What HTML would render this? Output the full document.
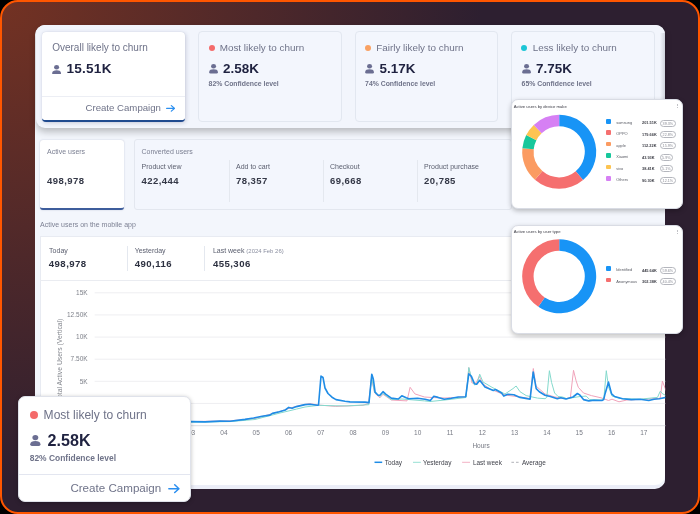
<!DOCTYPE html>
<html><head><meta charset="utf-8">
<style>
*{margin:0;padding:0;box-sizing:border-box}
html,body{width:700px;height:514px;overflow:hidden;background:#000;font-family:"Liberation Sans",sans-serif}
.abs{position:absolute}
.t{position:absolute;white-space:nowrap;line-height:1}
#frame{position:absolute;left:0;top:0;width:700px;height:514px;border-radius:18px;border:2px solid #ff5600;
 background:radial-gradient(circle 480px at 0 0,#733223 0%,#2d1f30 100%)}
#dash{position:absolute;left:35px;top:25px;width:630.3px;height:463.5px;border-radius:10px;background:#eceef8;overflow:hidden}
#dash::after{content:"";position:absolute;left:0;top:0;right:0;bottom:3.2px;background:#f3f6fc;border-radius:10px 10px 0 0}
#toppanel{position:absolute;left:35.5px;top:25px;width:629.5px;height:102.7px;border-radius:9px;background:#f2f5fc;
 box-shadow:0 4px 7px rgba(0,0,0,.24)}
</style></head><body>
<div id="frame"></div>
<div id="root" style="position:absolute;left:0;top:0;width:700px;height:514px;will-change:transform">
<div id="dash"></div>
<div class="abs" style="left:39.75px;top:139.5px;width:84.6px;height:70.3px;background:#fff;border-radius:3px;box-shadow:0 0 1.5px rgba(70,80,120,.35);border-bottom:2px solid #3e5d9c"></div>
<div class="t" style="left:47.00px;top:147.80px;font-size:7px;color:#7c8093;">Active users</div>
<div class="t" style="left:47.00px;top:176.12px;font-size:9.5px;color:#343847;font-weight:bold;letter-spacing:0.45px;">498,978</div>
<div class="abs" style="left:133.8px;top:139px;width:378px;height:70.6px;background:#f3f6fd;border:1px solid #e3e7ef;border-radius:3px"></div>
<div class="t" style="left:141.50px;top:148.05px;font-size:7px;color:#7c8093;">Converted users</div>
<div class="t" style="left:141.50px;top:163.15px;font-size:7px;color:#5a5e6e;">Product view</div>
<div class="t" style="left:141.50px;top:176.23px;font-size:9.5px;color:#343847;font-weight:bold;letter-spacing:0.45px;">422,444</div>
<div class="t" style="left:236.00px;top:163.15px;font-size:7px;color:#5a5e6e;">Add to cart</div>
<div class="t" style="left:236.00px;top:176.23px;font-size:9.5px;color:#343847;font-weight:bold;letter-spacing:0.45px;">78,357</div>
<div class="t" style="left:330.00px;top:163.15px;font-size:7px;color:#5a5e6e;">Checkout</div>
<div class="t" style="left:330.00px;top:176.23px;font-size:9.5px;color:#343847;font-weight:bold;letter-spacing:0.45px;">69,668</div>
<div class="t" style="left:424.10px;top:163.15px;font-size:7px;color:#5a5e6e;">Product purchase</div>
<div class="t" style="left:424.10px;top:176.23px;font-size:9.5px;color:#343847;font-weight:bold;letter-spacing:0.45px;">20,785</div>
<div class="abs" style="left:228.6px;top:159.7px;width:0.8px;height:42px;background:#e4e8ef"></div>
<div class="abs" style="left:323.1px;top:159.7px;width:0.8px;height:42px;background:#e4e8ef"></div>
<div class="abs" style="left:417.4px;top:159.7px;width:0.8px;height:42px;background:#e4e8ef"></div>
<div class="t" style="left:40.10px;top:221.15px;font-size:7px;color:#7c8093;">Active users on the mobile app</div>
<div class="abs" style="left:40px;top:236px;width:625.3px;height:249.3px;background:#fff;border-top:1px solid #e8ebf2;border-left:1px solid #e8ebf2;border-radius:0 0 10px 0"></div>
<div class="t" style="left:49.10px;top:246.95px;font-size:7px;color:#5a5e6e;">Today</div>
<div class="t" style="left:48.80px;top:259.24px;font-size:9.6px;color:#2c3040;font-weight:bold;letter-spacing:0.45px;">498,978</div>
<div class="t" style="left:134.70px;top:246.95px;font-size:7px;color:#5a5e6e;">Yesterday</div>
<div class="t" style="left:134.70px;top:259.24px;font-size:9.6px;color:#2c3040;font-weight:bold;letter-spacing:0.45px;">490,116</div>
<div class="t" style="left:212.90px;top:246.95px;font-size:7px;color:#5a5e6e;">Last week <span style="font-size:5.95px;color:#8b8fa0">(2024 Feb 26)</span></div>
<div class="t" style="left:212.90px;top:259.24px;font-size:9.6px;color:#2c3040;font-weight:bold;letter-spacing:0.45px;">455,306</div>
<div class="abs" style="left:126.5px;top:246px;width:0.8px;height:25px;background:#e4e8ef"></div>
<div class="abs" style="left:204.1px;top:246px;width:0.8px;height:25px;background:#e4e8ef"></div>
<div class="abs" style="left:40px;top:279.8px;width:626px;height:0.8px;background:#eaecf1"></div>
<svg class="abs" style="left:0;top:0" width="700" height="514">
<g stroke="#ececef" stroke-width="0.9">
<line x1="94.7" x2="665.3" y1="292.80" y2="292.80"/>
<line x1="94.7" x2="665.3" y1="314.93" y2="314.93"/>
<line x1="94.7" x2="665.3" y1="337.06" y2="337.06"/>
<line x1="94.7" x2="665.3" y1="359.19" y2="359.19"/>
<line x1="94.7" x2="665.3" y1="381.32" y2="381.32"/>
<line x1="94.7" x2="665.3" y1="403.45" y2="403.45"/>
</g>
<line x1="94.7" x2="665.3" y1="425.6" y2="425.6" stroke="#e2e3e7" stroke-width="1.1"/>
<g font-family="Liberation Sans" font-size="6.5" fill="#7e818a" text-anchor="end">
<text x="87.6" y="295.10">15K</text>
<text x="87.6" y="317.23">12.50K</text>
<text x="87.6" y="339.36">10K</text>
<text x="87.6" y="361.49">7.50K</text>
<text x="87.6" y="383.62">5K</text>
<text x="87.6" y="405.75">2.50K</text>
<text x="87.6" y="427.88">0</text>
</g>
<text transform="translate(61.5,360) rotate(-90)" font-family="Liberation Sans" font-size="6.8" fill="#85888f" text-anchor="middle">Total Active Users (Vertical)</text>
<g font-family="Liberation Sans" font-size="6.5" fill="#777a84" text-anchor="middle">
<text x="94.70" y="434.7">00</text>
<text x="127.00" y="434.7">01</text>
<text x="159.30" y="434.7">02</text>
<text x="191.60" y="434.7">03</text>
<text x="223.90" y="434.7">04</text>
<text x="256.20" y="434.7">05</text>
<text x="288.50" y="434.7">06</text>
<text x="320.80" y="434.7">07</text>
<text x="353.10" y="434.7">08</text>
<text x="385.40" y="434.7">09</text>
<text x="417.70" y="434.7">10</text>
<text x="450.00" y="434.7">11</text>
<text x="482.30" y="434.7">12</text>
<text x="514.60" y="434.7">13</text>
<text x="546.90" y="434.7">14</text>
<text x="579.20" y="434.7">15</text>
<text x="611.50" y="434.7">16</text>
<text x="643.80" y="434.7">17</text>
<text x="481.1" y="448">Hours</text></g>
<defs><clipPath id="cp"><rect x="90" y="280" width="575.3" height="200"/></clipPath></defs>
<g fill="none" stroke-linejoin="round" stroke-linecap="round" clip-path="url(#cp)">
<polyline points="95,421.6 191,421.6 230,420.8 255,418.5 280,411.5 290,408 300,405.5 309.4,403.6 318,405 335.7,406.4 363,405.3 368.5,403.5 371.6,378.1 374.6,393 379.9,397.8 383,394.3 391.3,400 407,400.9 410.1,387.3 414.9,393.9 424.5,397 432,397.5 445,398 466,397 468.8,367.6 472,383 476,383 479.3,376.4 483,384 490,389 505,395 520,397 530,398.5 533.3,368.5 536,386 545,394 555,397 566,398.7 570.4,397.4 573.5,370.3 576.1,380.8 578.3,387.3 583.5,393 591.4,395.6 601,397.8 605,399.2 608.5,400.5 612,399.2 619,401.8 626.9,400 640,399.5 660.2,398.3 662.4,381.2 667,393" stroke="#f0a3ba" stroke-width="1"/>
<polyline points="95,422.2 191,422.2 230,421.6 255,419.5 280,413 296.4,409.1 305,407 318.6,405.3 335,405.8 347,405.9 368.9,404.7 371.6,377 374.6,392.5 379.9,396.5 383,393.5 391.3,399.6 402,399 424.5,400.9 430,401.5 445,400 466,397.5 468.8,367.5 472,380 474.5,385 477,384 479.7,374.2 483,382 492,387.3 505,394 513,388.6 516.1,386 520,391.7 526.2,395.6 532.3,397 537.5,398.1 545,398.7 546.8,397.4 549.4,370.7 551.6,382.5 554.6,393 558.1,396.5 562.5,397 566.9,398.7 580,396.5 586.2,396.1 589.7,399.6 601.9,400 604,397 606.3,370.7 608.5,386.9 612,396 620,398.5 640,399.2 657.5,397.4 660.2,391.3 662.8,393.9 667,396" stroke="#84d9cc" stroke-width="1"/>
<polyline points="95,421.6 191,421.6 205,421.9 220,421.1 230,421.2 245,419.4 253.6,418 262.1,416.3 269.8,415.1 272.4,413.4 279.3,411.7 285.3,410 288.7,407.4 292.1,408.3 296.4,406.6 305,404.6 310,404.3 317.4,405.3 318.5,405 321,376.1 323,377.5 325,388 328,393.5 332,397.2 336,399.6 345,401.3 350,401.9 365,402.1 369,402.6 371.8,374.2 373.3,379 375.1,392.1 378.1,395.2 379.9,395.2 383,391.7 386,394.3 391.3,398.1 398.3,399 401.8,395.8 406.2,397.8 408.8,398.7 417.5,398.3 425,399.2 430.3,400.5 433.8,396.3 438.1,397.4 444.3,399.2 451.3,398.3 458.3,397 465.7,396.7 468.8,373.8 471.4,376.4 474.5,383.8 476.7,384.3 479.7,380.3 485,386.9 493.3,390.4 495.5,389.5 501.6,393 503.8,396.1 507.8,394.3 513.9,394.8 520,397.4 524.4,398.1 530.1,399.2 533.2,372 536.2,388.6 539.3,391.7 545,395.2 550.3,396.5 557.3,398.7 560.8,397.8 566,399 573,397 577.4,393.5 580,395.2 583.5,399.6 588.8,400.9 594,400.2 601.9,400.5 603.7,399.6 605,393.9 608.5,382.1 611.6,393.9 614.6,396.5 622.5,398.7 631.3,399.6 640,399.2 648.8,400.5 654,399.2 659.3,398.7 667,397.2" stroke="#1f8ce6" stroke-width="1.6"/>
</g>
<g font-family="Liberation Sans" font-size="6.45" fill="#3d3f48">
<line x1="374.5" x2="382.2" y1="462.3" y2="462.3" stroke="#1f8ce6" stroke-width="1.5"/><text x="384.8" y="464.7">Today</text>
<line x1="413" x2="420.8" y1="462.3" y2="462.3" stroke="#8adccf" stroke-width="0.9"/><text x="423" y="464.7">Yesterday</text>
<line x1="462.1" x2="470" y1="462.3" y2="462.3" stroke="#f2a9be" stroke-width="0.9"/><text x="472.9" y="464.7">Last week</text>
<line x1="511.4" x2="518.6" y1="462.3" y2="462.3" stroke="#8e9099" stroke-width="0.7" stroke-dasharray="2.6 2"/><text x="521.9" y="464.7">Average</text>
</g></svg>
<div id="toppanel"></div>
<div class="abs" style="left:659.5px;top:33px;width:5.5px;height:94.7px;background:linear-gradient(90deg,rgba(255,255,255,0),rgba(195,198,208,.75));border-radius:0 0 9px 0"></div>
<div class="abs" style="left:42px;top:31.5px;width:142.8px;height:90.5px;background:#fff;border-radius:4px;box-shadow:1px 1px 4px rgba(60,70,110,.22),0 0 1px rgba(60,70,110,.2);border-bottom:2px solid #1f4a8f"></div>
<div class="abs" style="left:42px;top:96px;width:142.5px;height:1px;background:#eceef4"></div>
<div class="t" style="left:52.20px;top:43.30px;font-size:10px;color:#6f7389;">Overall likely to churn</div>
<svg class="abs" style="left:52px;top:64.5px" width="9.2" height="9.7" viewBox="0 0 10 10" preserveAspectRatio="none"><ellipse cx="5" cy="2.35" rx="2.75" ry="2.35" fill="#6b6e92"/><path d="M0.2,8.3 C0.2,6.3 2.4,5.5 5,5.5 C7.6,5.5 9.8,6.3 9.8,8.3 L9.8,8.5 Q9.8,10 8.3,10 L1.7,10 Q0.2,10 0.2,8.5 Z" fill="#6b6e92"/></svg>
<div class="t" style="left:66.40px;top:61.84px;font-size:13.6px;color:#1f2240;font-weight:bold;letter-spacing:0.25px;">15.51K</div>
<div class="t" style="left:85.50px;top:103.30px;font-size:9.65px;color:#6f7389;">Create Campaign</div>
<svg class="abs" style="left:165.6px;top:104.9px" width="9.5" height="6.8" viewBox="0 0 10 8" preserveAspectRatio="none"><path d="M0.7,4 H9 M5.6,0.7 L9.1,4 L5.6,7.3" fill="none" stroke="#2b8ff0" stroke-width="1.3" stroke-linecap="round" stroke-linejoin="round"/></svg>
<div class="abs" style="left:198.0px;top:31px;width:143.5px;height:91px;background:#f3f6fd;border:1px solid #e2e7f0;border-radius:4px"></div>
<div class="abs" style="left:208.6px;top:44.6px;width:6.4px;height:6.4px;background:#f46b6b;border-radius:50%"></div>
<div class="t" style="left:219.70px;top:42.88px;font-size:9.9px;color:#6f7389;">Most likely to churn</div>
<svg class="abs" style="left:208.7px;top:64.3px" width="9.1" height="9.6" viewBox="0 0 10 10" preserveAspectRatio="none"><ellipse cx="5" cy="2.35" rx="2.75" ry="2.35" fill="#6b6e92"/><path d="M0.2,8.3 C0.2,6.3 2.4,5.5 5,5.5 C7.6,5.5 9.8,6.3 9.8,8.3 L9.8,8.5 Q9.8,10 8.3,10 L1.7,10 Q0.2,10 0.2,8.5 Z" fill="#6b6e92"/></svg>
<div class="t" style="left:223.10px;top:61.71px;font-size:13.4px;color:#1f2240;font-weight:bold;">2.58K</div>
<div class="t" style="left:208.60px;top:80.56px;font-size:6.87px;color:#6f7389;font-weight:bold;">82% Confidence level</div>
<div class="abs" style="left:354.5px;top:31px;width:143.5px;height:91px;background:#f3f6fd;border:1px solid #e2e7f0;border-radius:4px"></div>
<div class="abs" style="left:364.6px;top:44.6px;width:6.4px;height:6.4px;background:#f9a163;border-radius:50%"></div>
<div class="t" style="left:376.20px;top:42.88px;font-size:9.9px;color:#6f7389;">Fairly likely to churn</div>
<svg class="abs" style="left:365.2px;top:64.3px" width="9.1" height="9.6" viewBox="0 0 10 10" preserveAspectRatio="none"><ellipse cx="5" cy="2.35" rx="2.75" ry="2.35" fill="#6b6e92"/><path d="M0.2,8.3 C0.2,6.3 2.4,5.5 5,5.5 C7.6,5.5 9.8,6.3 9.8,8.3 L9.8,8.5 Q9.8,10 8.3,10 L1.7,10 Q0.2,10 0.2,8.5 Z" fill="#6b6e92"/></svg>
<div class="t" style="left:379.60px;top:61.71px;font-size:13.4px;color:#1f2240;font-weight:bold;">5.17K</div>
<div class="t" style="left:365.10px;top:80.56px;font-size:6.87px;color:#6f7389;font-weight:bold;">74% Confidence level</div>
<div class="abs" style="left:511.0px;top:31px;width:143.5px;height:91px;background:#f3f6fd;border:1px solid #e2e7f0;border-radius:4px"></div>
<div class="abs" style="left:521.1px;top:44.6px;width:6.4px;height:6.4px;background:#1cc5d6;border-radius:50%"></div>
<div class="t" style="left:532.70px;top:42.88px;font-size:9.9px;color:#6f7389;">Less likely to churn</div>
<svg class="abs" style="left:521.7px;top:64.3px" width="9.1" height="9.6" viewBox="0 0 10 10" preserveAspectRatio="none"><ellipse cx="5" cy="2.35" rx="2.75" ry="2.35" fill="#6b6e92"/><path d="M0.2,8.3 C0.2,6.3 2.4,5.5 5,5.5 C7.6,5.5 9.8,6.3 9.8,8.3 L9.8,8.5 Q9.8,10 8.3,10 L1.7,10 Q0.2,10 0.2,8.5 Z" fill="#6b6e92"/></svg>
<div class="t" style="left:536.10px;top:61.71px;font-size:13.4px;color:#1f2240;font-weight:bold;">7.75K</div>
<div class="t" style="left:521.60px;top:80.56px;font-size:6.87px;color:#6f7389;font-weight:bold;">65% Confidence level</div>
<div class="abs" style="left:511.4px;top:99.4px;width:171.2px;height:109.6px;background:#fff;border:1px solid #d9dce4;border-radius:7px;box-shadow:0 2px 5px rgba(0,0,0,.25)"></div>
<div class="t" style="left:513.70px;top:104.73px;font-size:4.2px;color:#3a3a44;">Active users by device make</div>
<div class="abs" style="left:676.9px;top:103.7px;width:0.9px;height:0.9px;background:#9a9ca3;border-radius:50%"></div>
<div class="abs" style="left:676.9px;top:105.2px;width:0.9px;height:0.9px;background:#9a9ca3;border-radius:50%"></div>
<div class="abs" style="left:676.9px;top:106.7px;width:0.9px;height:0.9px;background:#9a9ca3;border-radius:50%"></div>
<svg class="abs" style="left:0;top:0" width="700" height="514"><path d="M559.20,114.80 A37,37 0 0 1 583.08,180.06 L575.72,171.35 A25.6,25.6 0 0 0 559.20,126.20 Z" fill="#1894f6"/><path d="M583.08,180.06 A37,37 0 0 1 534.93,179.72 L542.40,171.12 A25.6,25.6 0 0 0 575.72,171.35 Z" fill="#f56f6f"/><path d="M534.93,179.72 A37,37 0 0 1 522.37,148.25 L533.72,149.35 A25.6,25.6 0 0 0 542.40,171.12 Z" fill="#fb9b61"/><path d="M522.37,148.25 A37,37 0 0 1 526.23,135.00 L536.39,140.18 A25.6,25.6 0 0 0 533.72,149.35 Z" fill="#17c79b"/><path d="M526.23,135.00 A37,37 0 0 1 533.78,124.92 L541.61,133.20 A25.6,25.6 0 0 0 536.39,140.18 Z" fill="#fdc452"/><path d="M533.78,124.92 A37,37 0 0 1 559.20,114.80 L559.20,126.20 A25.6,25.6 0 0 0 541.61,133.20 Z" fill="#d680f4"/></svg>
<div class="abs" style="left:605.9px;top:119.0px;width:5px;height:4.5px;background:#1894f6;border-radius:1px"></div>
<div class="t" style="left:616.20px;top:120.84px;font-size:3.95px;color:#5b5d66;">samsung</div>
<div class="t" style="left:642.00px;top:121.48px;font-size:3.9px;color:#3c3d46;font-weight:bold;">201.51K</div>
<div class="abs" style="left:660px;top:119.50px;width:15.7px;height:7px;border:0.5px solid #b4b6bd;border-radius:3.5px;background:#fff;font-size:3.7px;line-height:6px;text-align:center;color:#8a8c95;white-space:nowrap">39.3%</div>
<div class="abs" style="left:605.9px;top:130.39999999999998px;width:5px;height:4.5px;background:#f56f6f;border-radius:1px"></div>
<div class="t" style="left:616.20px;top:132.24px;font-size:3.95px;color:#5b5d66;">OPPO</div>
<div class="t" style="left:642.00px;top:132.88px;font-size:3.9px;color:#3c3d46;font-weight:bold;">179.66K</div>
<div class="abs" style="left:660px;top:130.90px;width:15.7px;height:7px;border:0.5px solid #b4b6bd;border-radius:3.5px;background:#fff;font-size:3.7px;line-height:6px;text-align:center;color:#8a8c95;white-space:nowrap">22.8%</div>
<div class="abs" style="left:605.9px;top:141.89999999999998px;width:5px;height:4.5px;background:#fb9b61;border-radius:1px"></div>
<div class="t" style="left:616.20px;top:143.74px;font-size:3.95px;color:#5b5d66;">apple</div>
<div class="t" style="left:642.00px;top:144.38px;font-size:3.9px;color:#3c3d46;font-weight:bold;">112.22K</div>
<div class="abs" style="left:660px;top:142.40px;width:15.7px;height:7px;border:0.5px solid #b4b6bd;border-radius:3.5px;background:#fff;font-size:3.7px;line-height:6px;text-align:center;color:#8a8c95;white-space:nowrap">15.9%</div>
<div class="abs" style="left:605.9px;top:153.29999999999998px;width:5px;height:4.5px;background:#17c79b;border-radius:1px"></div>
<div class="t" style="left:616.20px;top:155.14px;font-size:3.95px;color:#5b5d66;">Xiaomi</div>
<div class="t" style="left:642.00px;top:155.78px;font-size:3.9px;color:#3c3d46;font-weight:bold;">43.93K</div>
<div class="abs" style="left:660px;top:153.80px;width:12.6px;height:7px;border:0.5px solid #b4b6bd;border-radius:3.5px;background:#fff;font-size:3.7px;line-height:6px;text-align:center;color:#8a8c95;white-space:nowrap">5.9%</div>
<div class="abs" style="left:605.9px;top:164.7px;width:5px;height:4.5px;background:#fdc452;border-radius:1px"></div>
<div class="t" style="left:616.20px;top:166.54px;font-size:3.95px;color:#5b5d66;">vivo</div>
<div class="t" style="left:642.00px;top:167.19px;font-size:3.9px;color:#3c3d46;font-weight:bold;">38.41K</div>
<div class="abs" style="left:660px;top:165.20px;width:12.6px;height:7px;border:0.5px solid #b4b6bd;border-radius:3.5px;background:#fff;font-size:3.7px;line-height:6px;text-align:center;color:#8a8c95;white-space:nowrap">5.1%</div>
<div class="abs" style="left:605.9px;top:176.2px;width:5px;height:4.5px;background:#d680f4;border-radius:1px"></div>
<div class="t" style="left:616.20px;top:178.04px;font-size:3.95px;color:#5b5d66;">Others</div>
<div class="t" style="left:642.00px;top:178.69px;font-size:3.9px;color:#3c3d46;font-weight:bold;">90.30K</div>
<div class="abs" style="left:660px;top:176.70px;width:15.7px;height:7px;border:0.5px solid #b4b6bd;border-radius:3.5px;background:#fff;font-size:3.7px;line-height:6px;text-align:center;color:#8a8c95;white-space:nowrap">12.1%</div>
<div class="abs" style="left:511.4px;top:225.3px;width:171.2px;height:108.3px;background:#fff;border:1px solid #d9dce4;border-radius:7px;box-shadow:0 2px 5px rgba(0,0,0,.25)"></div>
<div class="t" style="left:513.70px;top:229.73px;font-size:4.2px;color:#3a3a44;">Active users by user type</div>
<div class="abs" style="left:676.9px;top:229.60000000000002px;width:0.9px;height:0.9px;background:#9a9ca3;border-radius:50%"></div>
<div class="abs" style="left:676.9px;top:231.10000000000002px;width:0.9px;height:0.9px;background:#9a9ca3;border-radius:50%"></div>
<div class="abs" style="left:676.9px;top:232.60000000000002px;width:0.9px;height:0.9px;background:#9a9ca3;border-radius:50%"></div>
<svg class="abs" style="left:0;top:0" width="700" height="514"><path d="M559.20,239.30 A37,37 0 1 1 538.30,306.83 L544.74,297.42 A25.6,25.6 0 1 0 559.20,250.70 Z" fill="#1894f6"/><path d="M538.30,306.83 A37,37 0 0 1 559.20,239.30 L559.20,250.70 A25.6,25.6 0 0 0 544.74,297.42 Z" fill="#f56f6f"/></svg>
<div class="abs" style="left:605.9px;top:266.09999999999997px;width:5px;height:4.5px;background:#1894f6;border-radius:1px"></div>
<div class="t" style="left:616.20px;top:267.94px;font-size:3.95px;color:#5b5d66;">Identified</div>
<div class="t" style="left:642.00px;top:268.58px;font-size:3.9px;color:#3c3d46;font-weight:bold;">445.64K</div>
<div class="abs" style="left:660px;top:266.60px;width:15.7px;height:7px;border:0.5px solid #b4b6bd;border-radius:3.5px;background:#fff;font-size:3.7px;line-height:6px;text-align:center;color:#8a8c95;white-space:nowrap">59.6%</div>
<div class="abs" style="left:605.9px;top:277.7px;width:5px;height:4.5px;background:#f56f6f;border-radius:1px"></div>
<div class="t" style="left:616.20px;top:279.54px;font-size:3.95px;color:#5b5d66;">Anonymous</div>
<div class="t" style="left:642.00px;top:280.19px;font-size:3.9px;color:#3c3d46;font-weight:bold;">302.38K</div>
<div class="abs" style="left:660px;top:278.20px;width:15.7px;height:7px;border:0.5px solid #b4b6bd;border-radius:3.5px;background:#fff;font-size:3.7px;line-height:6px;text-align:center;color:#8a8c95;white-space:nowrap">40.4%</div>
<div class="abs" style="left:18px;top:396px;width:172.5px;height:105.5px;background:#fff;border-radius:7px;border:1px solid #dfe2ea;box-shadow:0 1px 4px rgba(0,0,0,.25)"></div>
<div class="abs" style="left:29.7px;top:410.9px;width:7.9px;height:7.9px;background:#f46b6b;border-radius:50%"></div>
<div class="t" style="left:43.60px;top:409.26px;font-size:12.05px;color:#6f7389;">Most likely to churn</div>
<svg class="abs" style="left:30px;top:435px" width="10.7" height="11" viewBox="0 0 10 10" preserveAspectRatio="none"><ellipse cx="5" cy="2.35" rx="2.75" ry="2.35" fill="#6b6e92"/><path d="M0.2,8.3 C0.2,6.3 2.4,5.5 5,5.5 C7.6,5.5 9.8,6.3 9.8,8.3 L9.8,8.5 Q9.8,10 8.3,10 L1.7,10 Q0.2,10 0.2,8.5 Z" fill="#6b6e92"/></svg>
<div class="t" style="left:47.60px;top:431.71px;font-size:16.1px;color:#1f2240;font-weight:bold;">2.58K</div>
<div class="t" style="left:29.70px;top:453.92px;font-size:8.45px;color:#6f7389;font-weight:bold;">82% Confidence level</div>
<div class="abs" style="left:18.5px;top:474.2px;width:171.5px;height:0.9px;background:#e3e6f0"></div>
<div class="t" style="left:70.40px;top:482.14px;font-size:11.6px;color:#6f7389;">Create Campaign</div>
<svg class="abs" style="left:167.6px;top:484.4px" width="12" height="9.4" viewBox="0 0 10 8" preserveAspectRatio="none"><path d="M0.7,4 H9 M5.6,0.7 L9.1,4 L5.6,7.3" fill="none" stroke="#2b8ff0" stroke-width="1.25" stroke-linecap="round" stroke-linejoin="round"/></svg>
</div>
</body></html>
